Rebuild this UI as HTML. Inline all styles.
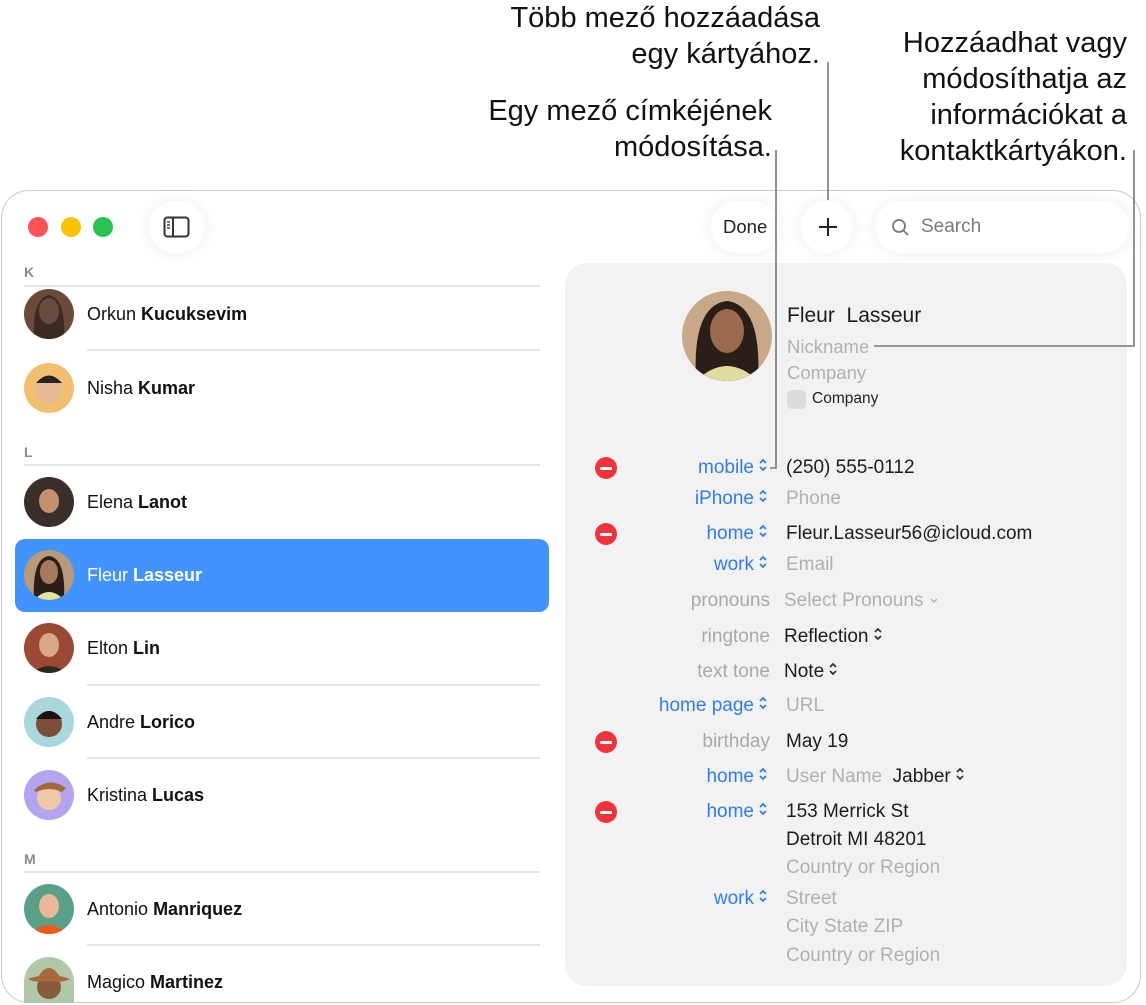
<!DOCTYPE html>
<html><head><meta charset="utf-8">
<style>
*{margin:0;padding:0;box-sizing:border-box}
body{width:1146px;height:1005px;background:#fff;position:relative;overflow:hidden;font-family:"Liberation Sans",sans-serif;color:#1d1d1f}
.a{position:absolute;white-space:nowrap}
.cap{font-size:29px;line-height:36px;color:#111;text-align:right}
.win{position:absolute;left:1px;top:190px;width:1140px;height:813px;border:1.5px solid #c9c9c9;border-radius:28px;background:#fff}
.dot{position:absolute;width:20px;height:20px;border-radius:50%;top:217px}
.pill{position:absolute;background:#fff;box-shadow:0 0 18px rgba(0,0,0,.07)}
.hdr{font-size:14px;color:#8a8a8a;font-weight:bold}
.sep{position:absolute;height:1.5px;background:#e4e4e4}
.av{position:absolute;left:24px;width:50px;height:50px;border-radius:50%;overflow:hidden}
.nm{position:absolute;left:87px;font-size:18px;color:#111}
.nm b{font-weight:bold}
.panel{position:absolute;left:565px;top:263px;width:562px;height:723px;background:#f2f2f2;border-radius:22px}
.lb{position:absolute;right:378px;font-size:19px;color:#2f7cf6;text-align:right}
.lg{color:#a9a9a9}
.ch{display:inline-block;width:10px;margin-left:4px}
.v{position:absolute;left:786px;font-size:19px;color:#1d1d1f}
.ph{color:#b0b0b0}
.minus{position:absolute;left:595px;width:22px;height:22px;border-radius:50%;background:#f5323c}
.minus:after{content:"";position:absolute;left:5px;top:10px;width:12px;height:2.5px;background:#fff;border-radius:1px}
</style></head><body>

<div class="a cap" style="right:326px;top:0px">Több mező hozzáadása<br>egy kártyához.</div>
<div class="a cap" style="right:374px;top:93px">Egy mező címkéjének<br>módosítása.</div>
<div class="a cap" style="right:19px;top:25px">Hozzáadhat vagy<br>módosíthatja az<br>információkat a<br>kontaktkártyákon.</div>

<div class="win"></div>
<div class="dot" style="left:28px;background:#ff5257"></div>
<div class="dot" style="left:61px;background:#fdc200"></div>
<div class="dot" style="left:93px;background:#2ac350"></div>
<div class="pill" style="left:149px;top:201px;width:56px;height:52px;border-radius:26px"></div>
<svg class="a" style="left:163px;top:216px" width="28" height="22" viewBox="0 0 28 22"><rect x="1.5" y="1.5" width="24" height="19" rx="3" fill="none" stroke="#333" stroke-width="2"/><line x1="10" y1="2" x2="10" y2="20" stroke="#333" stroke-width="2"/><line x1="4" y1="6" x2="7" y2="6" stroke="#333" stroke-width="1.4"/><line x1="4" y1="9" x2="7" y2="9" stroke="#333" stroke-width="1.4"/><line x1="4" y1="12" x2="7" y2="12" stroke="#333" stroke-width="1.4"/></svg>

<div class="pill" style="left:711px;top:201px;width:68px;height:52px;border-radius:26px"></div>
<div class="a" style="left:723px;top:216px;font-size:18.5px;color:#222">Done</div>
<div class="pill" style="left:801px;top:201px;width:52px;height:52px;border-radius:26px"></div>
<svg class="a" style="left:817px;top:216px" width="22" height="22"><line x1="11" y1="2" x2="11" y2="20" stroke="#222" stroke-width="2"/><line x1="2" y1="11" x2="20" y2="11" stroke="#222" stroke-width="2"/></svg>
<div class="pill" style="left:875px;top:201px;width:254px;height:52px;border-radius:26px"></div>
<svg class="a" style="left:891px;top:218px" width="20" height="20"><circle cx="8" cy="8" r="6" fill="none" stroke="#777" stroke-width="1.8"/><line x1="12.5" y1="12.5" x2="17" y2="17" stroke="#777" stroke-width="1.8"/></svg>
<div class="a" style="left:921px;top:216px;font-size:19px;color:#7a7a7a">Search</div>

<!-- list -->
<div class="a hdr" style="left:24px;top:264px">K</div>
<div class="sep" style="left:24px;top:285px;width:516px"></div>
<div class="av" style="top:289px;background:#6b4a3a"><svg width="50" height="50"><ellipse cx="25" cy="22" rx="10" ry="13" fill="#d6a48a"/><path d="M10 50 Q8 10 25 6 Q42 10 40 50 Z" fill="#1c1410" opacity=".6"/></svg></div>
<div class="nm" style="top:304px">Orkun <b>Kucuksevim</b></div>
<div class="sep" style="left:87px;top:349px;width:453px"></div>
<div class="av" style="top:363px;background:#f0c070"><svg width="50" height="50"><circle cx="25" cy="27" r="13" fill="#e8b896"/><path d="M12 20 Q25 5 38 20 Z" fill="#2a2220"/></svg></div>
<div class="nm" style="top:378px">Nisha <b>Kumar</b></div>

<div class="a hdr" style="left:24px;top:444px">L</div>
<div class="sep" style="left:24px;top:464px;width:516px"></div>
<div class="av" style="top:477px;background:#3a2e2a"><svg width="50" height="50"><ellipse cx="25" cy="24" rx="10" ry="12" fill="#c4906e"/></svg></div>
<div class="nm" style="top:492px">Elena <b>Lanot</b></div>

<div class="a" style="left:15px;top:539px;width:534px;height:73px;background:#4193fd;border-radius:10px"></div>
<div class="av" style="top:550px;background:#b89a7a"><svg width="50" height="50"><path d="M10 50 Q8 8 25 6 Q42 8 40 50 Z" fill="#2a1e18"/><ellipse cx="25" cy="22" rx="9" ry="12" fill="#a87a5c"/><path d="M10 50 Q25 34 40 50Z" fill="#e4e0a0"/></svg></div>
<div class="nm" style="top:565px;color:#fff">Fleur <b>Lasseur</b></div>

<div class="av" style="top:623px;background:#9a4a34"><svg width="50" height="50"><ellipse cx="25" cy="22" rx="10" ry="12" fill="#d8a888"/><path d="M8 50 Q25 36 42 50Z" fill="#2a2a1a"/></svg></div>
<div class="nm" style="top:638px">Elton <b>Lin</b></div>
<div class="sep" style="left:87px;top:684px;width:453px"></div>
<div class="av" style="top:697px;background:#a8d8dc"><svg width="50" height="50"><circle cx="25" cy="27" r="13" fill="#7a4e38"/><path d="M12 22 Q25 6 38 22 Z" fill="#1a1410"/></svg></div>
<div class="nm" style="top:712px">Andre <b>Lorico</b></div>
<div class="sep" style="left:87px;top:757px;width:453px"></div>
<div class="av" style="top:770px;background:#b4a4f0"><svg width="50" height="50"><circle cx="25" cy="28" r="12" fill="#f0c8a8"/><path d="M10 20 Q25 6 42 18 L38 22 Q25 16 12 22Z" fill="#a0683c"/></svg></div>
<div class="nm" style="top:785px">Kristina <b>Lucas</b></div>

<div class="a hdr" style="left:24px;top:851px">M</div>
<div class="sep" style="left:24px;top:871px;width:516px"></div>
<div class="av" style="top:884px;background:#5aa088"><svg width="50" height="50"><ellipse cx="25" cy="22" rx="10" ry="12" fill="#e8b898"/><path d="M6 50 Q25 32 44 50Z" fill="#f25a18"/></svg></div>
<div class="nm" style="top:899px">Antonio <b>Manriquez</b></div>
<div class="sep" style="left:87px;top:944px;width:453px"></div>
<div class="av" style="top:957px;height:46px;border-radius:25px 25px 0 0;background:#b0c8a8"><svg width="50" height="50"><circle cx="25" cy="30" r="12" fill="#8a5a3c"/><path d="M4 22 Q25 14 46 22 Q40 26 25 24 Q10 26 4 22Z M14 20 Q25 2 36 20Z" fill="#a86a3a"/></svg></div>
<div class="nm" style="top:972px">Magico <b>Martinez</b></div>

<!-- panel -->
<div class="panel"></div>
<div class="a" style="left:682px;top:291px;width:90px;height:90px;border-radius:50%;overflow:hidden;background:#c8a888"><svg width="90" height="90"><path d="M14 90 Q10 14 45 10 Q80 14 76 90Z" fill="#2a1e18"/><ellipse cx="45" cy="40" rx="17" ry="22" fill="#9a6a4c"/><path d="M14 90 Q45 60 76 90Z" fill="#e0dca0"/></svg></div>
<div class="a" style="left:787px;top:304px;font-size:21px;color:#1d1d1f">Fleur&nbsp; Lasseur</div>
<div class="a" style="left:787px;top:336px;font-size:18.5px;color:#b0b0b0">Nickname</div>
<div class="a" style="left:787px;top:362px;font-size:18.5px;color:#b0b0b0">Company</div>
<div class="a" style="left:787px;top:390px;width:19px;height:19px;border-radius:5px;background:#dcdcdc"></div>
<div class="a" style="left:812px;top:390px;font-size:15.5px;color:#222">Company</div>

<svg width="0" height="0" style="position:absolute"><defs><symbol id="ud" viewBox="0 0 10 16"><path d="M2 6 L5 3 L8 6 M2 10 L5 13 L8 10" fill="none" stroke="#2f7cf6" stroke-width="1.8"/></symbol><symbol id="udk" viewBox="0 0 10 16"><path d="M2 6 L5 3 L8 6 M2 10 L5 13 L8 10" fill="none" stroke="#333" stroke-width="1.8"/></symbol></defs></svg>

<div class="minus" style="top:457px"></div>
<div class="lb" style="top:457px">mobile<svg class="ch" width="10" height="16"><use href="#ud"/></svg></div>
<div class="v" style="top:457px">(250) 555-0112</div>
<div class="lb" style="top:488px">iPhone<svg class="ch" width="10" height="16"><use href="#ud"/></svg></div>
<div class="v ph" style="top:488px">Phone</div>
<div class="minus" style="top:523px"></div>
<div class="lb" style="top:523px">home<svg class="ch" width="10" height="16"><use href="#ud"/></svg></div>
<div class="v" style="top:523px">Fleur.Lasseur56@icloud.com</div>
<div class="lb" style="top:554px">work<svg class="ch" width="10" height="16"><use href="#ud"/></svg></div>
<div class="v ph" style="top:554px">Email</div>
<div class="lb lg" style="top:590px;right:376px">pronouns</div>
<div class="v ph" style="top:590px;left:784px">Select Pronouns <svg width="10" height="10"><path d="M2 3 L5 6 L8 3" fill="none" stroke="#b0b0b0" stroke-width="1.5"/></svg></div>
<div class="lb lg" style="top:626px;right:376px">ringtone</div>
<div class="v" style="top:626px;left:784px">Reflection<svg class="ch" width="10" height="16"><use href="#udk"/></svg></div>
<div class="lb lg" style="top:661px;right:376px">text tone</div>
<div class="v" style="top:661px;left:784px">Note<svg class="ch" width="10" height="16"><use href="#udk"/></svg></div>
<div class="lb" style="top:695px">home page<svg class="ch" width="10" height="16"><use href="#ud"/></svg></div>
<div class="v ph" style="top:695px">URL</div>
<div class="minus" style="top:731px"></div>
<div class="lb lg" style="top:731px;right:376px">birthday</div>
<div class="v" style="top:731px">May 19</div>
<div class="lb" style="top:766px">home<svg class="ch" width="10" height="16"><use href="#ud"/></svg></div>
<div class="v" style="top:766px"><span class="ph">User Name</span>&nbsp; Jabber<svg class="ch" width="10" height="16"><use href="#udk"/></svg></div>
<div class="minus" style="top:801px"></div>
<div class="lb" style="top:801px">home<svg class="ch" width="10" height="16"><use href="#ud"/></svg></div>
<div class="v" style="top:801px">153 Merrick St</div>
<div class="v" style="top:829px">Detroit MI 48201</div>
<div class="v ph" style="top:857px">Country or Region</div>
<div class="lb" style="top:888px">work<svg class="ch" width="10" height="16"><use href="#ud"/></svg></div>
<div class="v ph" style="top:888px">Street</div>
<div class="v ph" style="top:916px">City State ZIP</div>
<div class="v ph" style="top:945px">Country or Region</div>

<!-- callout lines -->
<svg class="a" style="left:0;top:0" width="1146" height="1005"><g fill="none" stroke="#777" stroke-width="1.6"><path d="M828 62 V200"/><path d="M776 150 V468 H770"/><path d="M1134 150 V346 H874"/></g></svg>
</body></html>
